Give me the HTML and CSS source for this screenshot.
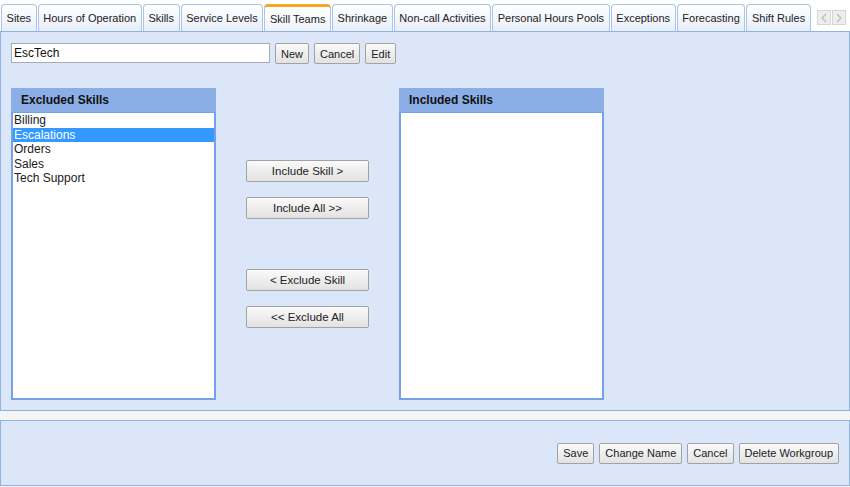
FILE: index.html
```html
<!DOCTYPE html>
<html lang="en">
<head>
  <meta charset="UTF-8" />
  <title>Skill Teams</title>
  <link rel="stylesheet" href="styles.css">
</head>
<body>
  <div class="tabbar">
    <div class="tabs">
      <div class="tab">Sites</div>
      <div class="tab">Hours of Operation</div>
      <div class="tab">Skills</div>
      <div class="tab">Service Levels</div>
      <div class="tab active">Skill Teams</div>
      <div class="tab">Shrinkage</div>
      <div class="tab">Non-call Activities</div>
      <div class="tab">Personal Hours Pools</div>
      <div class="tab">Exceptions</div>
      <div class="tab">Forecasting</div>
      <div class="tab">Shift Rules</div>
    </div>
    <div class="scrollers">
      <span class="arrow">
        <svg width="8" height="10" viewBox="0 0 8 10"><path d="M6 1 L2 5 L6 9" fill="none" stroke="#bbb" stroke-width="1.3"/></svg>
      </span>
      <span class="arrow">
        <svg width="8" height="10" viewBox="0 0 8 10"><path d="M2 1 L6 5 L2 9" fill="none" stroke="#bbb" stroke-width="1.3"/></svg>
      </span>
    </div>
  </div>

  <div class="panel main">
    <div class="toolbar">
      <input class="name-input" type="text" value="EscTech">
      <button class="btn">New</button>
      <button class="btn">Cancel</button>
      <button class="btn">Edit</button>
    </div>

    <div class="lists">
      <div class="skill-box">
        <div class="skill-head">Excluded Skills</div>
        <ul class="skill-list">
          <li>Billing</li>
          <li class="selected">Escalations</li>
          <li>Orders</li>
          <li>Sales</li>
          <li>Tech Support</li>
        </ul>
      </div>

      <div class="movers">
        <div class="mover-group">
          <button class="btn wide">Include Skill &gt;</button>
          <button class="btn wide">Include All &gt;&gt;</button>
        </div>
        <div class="mover-group">
          <button class="btn wide">&lt; Exclude Skill</button>
          <button class="btn wide">&lt;&lt; Exclude All</button>
        </div>
      </div>

      <div class="skill-box">
        <div class="skill-head">Included Skills</div>
        <ul class="skill-list"></ul>
      </div>
    </div>
  </div>

  <div class="panel footer">
    <button class="btn">Save</button>
    <button class="btn">Change Name</button>
    <button class="btn">Cancel</button>
    <button class="btn">Delete Workgroup</button>
  </div>
</body>
</html>
```

FILE: styles.css
```css
body {
  margin: 0;
  width: 850px;
  height: 487px;
  background: #f5f5f5;
  font-family: "Liberation Sans", Arial, sans-serif;
  font-size: 12px;
  color: #1a1a1a;
  overflow: hidden;
}

.tabbar {
  display: flex;
  justify-content: space-between;
  align-items: flex-start;
  background: #fff;
  padding: 4px 0 0 1px;
  height: 27px;
}

.tabs {
  display: flex;
  gap: 1px;
}

.tab {
  height: 26px;
  line-height: 27px;
  padding: 0 4.6px;
  border: 1px solid #a9c4e8;
  border-bottom: none;
  border-radius: 4px 4px 0 0;
  background: linear-gradient(to bottom, #ffffff, #e7eef9);
  font-size: 11px;
  color: #222;
  white-space: nowrap;
}

.tab.active {
  border-top: 3px solid #f5a623;
  height: 24px;
  line-height: 25px;
  background: linear-gradient(to bottom, #ffffff, #eef3fb);
}

.scrollers {
  display: flex;
  gap: 1px;
  margin: 6px 4px 0 0;
}

.arrow {
  display: flex;
  align-items: center;
  justify-content: center;
  width: 12px;
  height: 13px;
  border: 1px solid #d6d6d6;
  background: #eeeeee;
}

.panel {
  background: #dbe6f9;
  border: 1px solid #8db3e3;
}

.main {
  height: 378px;
  padding: 0 10px;
}

.toolbar {
  display: flex;
  align-items: flex-start;
  gap: 5px;
  margin-top: 11px;
}

.name-input {
  width: 253px;
  height: 16px;
  margin: 0;
  padding: 1px 2px;
  border: 1px solid #a6adb6;
  font-family: inherit;
  font-size: 12px;
  color: #111;
}

.btn {
  height: 21px;
  padding: 0 5px;
  border: 1px solid #a2a2a2;
  border-radius: 2px;
  background: linear-gradient(to bottom, #fafafa, #e2e2e2);
  font-family: inherit;
  font-size: 11px;
  color: #222;
}

.lists {
  display: flex;
  margin-top: 24px;
}

.skill-box {
  width: 205px;
  display: flex;
  flex-direction: column;
}

.skill-head {
  height: 24px;
  line-height: 24px;
  padding-left: 10px;
  background: #8caee6;
  font-weight: bold;
  color: #111;
}

.skill-list {
  list-style: none;
  margin: 0;
  padding: 0;
  height: 285px;
  background: #fff;
  border: 2px solid #72a2ea;
  border-top: 1px solid #72a2ea;
}

.skill-list li {
  height: 14.6px;
  line-height: 14.6px;
  padding-left: 1px;
}

.skill-list li.selected {
  background: #3399ff;
  color: #fff;
}

.movers {
  width: 183px;
  display: flex;
  flex-direction: column;
  align-items: center;
  gap: 50px;
  padding-top: 72px;
}

.mover-group {
  display: flex;
  flex-direction: column;
  gap: 15px;
}

.btn.wide {
  width: 123px;
  height: 22px;
  font-size: 11.5px;
}

.footer {
  margin-top: 9px;
  height: 64px;
  display: flex;
  justify-content: flex-end;
  align-items: center;
  gap: 5px;
  padding-right: 10px;
}
```
